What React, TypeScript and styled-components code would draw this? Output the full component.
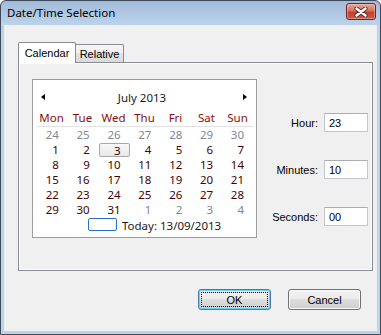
import React from 'react';
import styled, { createGlobalStyle, css } from 'styled-components';

const GlobalStyle = createGlobalStyle`
  html, body {
    margin: 0;
    padding: 0;
    background: #ffffff;
  }
  body {
    width: 381px;
    height: 335px;
    overflow: hidden;
  }
`;

const uiFont = `"Liberation Sans", Arial, sans-serif`;
const segoeFont = `"Noto Sans", "Open Sans", sans-serif`;

const Window = styled.div`
  box-sizing: border-box;
  width: 381px;
  height: 335px;
  border: 1px solid #3e4a5a;
  border-radius: 6px 6px 0 0;
  background: linear-gradient(#a2bbd8, #bcd3ec 24px, #bcd3ec);
  display: flex;
  flex-direction: column;
`;

const TitleBar = styled.div`
  height: 24px;
  display: flex;
  align-items: center;
  justify-content: space-between;
  padding: 0 4px 0 6px;
`;

const Title = styled.span`
  font-family: ${segoeFont};
  font-size: 11.5px;
  color: #000;
  margin-top: -1px;
`;

const CloseButton = styled.div`
  box-sizing: border-box;
  width: 30px;
  height: 17px;
  margin-top: -3px;
  border: 1px solid #6b2323;
  border-radius: 3px;
  background: linear-gradient(#e8a999, #d46f5c 45%, #c2422e 55%, #c85a43);
  box-shadow: inset 0 0 0 1px rgba(255, 210, 200, 0.45);
  display: flex;
  align-items: center;
  justify-content: center;
`;

const Client = styled.div`
  flex: 1;
  margin: 0 3px 3px 3px;
  background: #f0f0f0;
  display: flex;
  flex-direction: column;
  padding: 17px 0 0 14px;
  box-sizing: border-box;
`;

const TabStrip = styled.div`
  display: flex;
  align-items: flex-end;
  height: 20px;
  position: relative;
  z-index: 1;
`;

const Tab = styled.div<{ $active?: boolean; $width: number }>`
  box-sizing: border-box;
  width: ${(p) => p.$width}px;
  border: 1px solid #898c95;
  border-bottom: none;
  border-radius: 2px 2px 0 0;
  font-family: ${uiFont};
  font-size: 11px;
  color: #000;
  display: flex;
  align-items: center;
  justify-content: center;
  ${(p) =>
    p.$active
      ? css`
          height: 21px;
          margin-bottom: -1px;
          background: #ffffff;
          padding-bottom: 1px;
        `
      : css`
          height: 18px;
          margin-left: -1px;
          background: linear-gradient(#f6f6f6, #eeeeee 50%, #e4e4e4 50%, #dadada);
          padding-top: 1px;
        `}
`;

const Panel = styled.div`
  box-sizing: border-box;
  width: 355px;
  height: 209px;
  border: 1px solid #898c95;
  background: #f0f0f0;
  box-shadow: inset 1px 1px 0 #ffffff, inset -1px -1px 0 #ffffff;
  display: flex;
  align-items: flex-start;
`;

const MonthCal = styled.div`
  box-sizing: border-box;
  width: 225px;
  height: 159px;
  margin: 16px 0 0 13px;
  border: 1px solid #9c9c9c;
  background: #ffffff;
  font-family: ${segoeFont};
  font-size: 11.5px;
  padding: 0 1px 0 2px;
`;

const CalHeader = styled.div`
  height: 20px;
  margin-top: 7px;
  display: flex;
  align-items: center;
  justify-content: space-between;
  padding: 0 8px 0 6px;
`;

const Arrow = styled.span<{ $dir: 'left' | 'right' }>`
  width: 0;
  height: 0;
  border-top: 3.5px solid transparent;
  border-bottom: 3.5px solid transparent;
  ${(p) =>
    p.$dir === 'left'
      ? css`
          border-right: 4px solid #000;
        `
      : css`
          border-left: 4px solid #000;
        `}
`;

const MonthTitle = styled.span`
  color: #1a1a1a;
  margin-right: 4px;
`;

const DayNames = styled.div`
  display: grid;
  grid-template-columns: repeat(7, 1fr);
  height: 18px;
  margin: 1px 1px 0 2px;
  align-items: center;
  border-bottom: 1px solid #e2e2e2;
`;

const DayName = styled.span`
  text-align: center;
  color: #8b0d0d;
  margin-left: -2px;
`;

const DateGrid = styled.div`
  display: grid;
  grid-template-columns: repeat(7, 1fr);
  grid-auto-rows: 15px;
  padding: 0 1px 0 3px;
`;

const DateCell = styled.span<{ $muted?: boolean; $selected?: boolean }>`
  box-sizing: border-box;
  display: flex;
  align-items: center;
  justify-content: flex-end;
  padding-right: 10px;
  color: ${(p) => (p.$muted ? '#7f8791' : '#420303')};
  ${(p) =>
    p.$selected &&
    css`
      margin: 1px 1px 0 -1px;
      border: 1px solid #a8a8a8;
      border-radius: 2px;
      background: linear-gradient(#f8f8f8, #e8e8e8);
      padding-right: 8px;
    `}
`;

const TodayRow = styled.div`
  height: 16px;
  display: flex;
  align-items: center;
  gap: 5px;
  padding-left: 53px;
  color: #1a1a1a;
`;

const TodayMark = styled.span`
  box-sizing: border-box;
  width: 29px;
  height: 13px;
  border: 1px solid #2b6fce;
  border-radius: 2px;
  margin-top: -2px;
`;

const Fields = styled.div`
  margin: 50px 4px 0 auto;
  display: flex;
  flex-direction: column;
  gap: 28px;
`;

const FieldRow = styled.label`
  display: flex;
  align-items: center;
  justify-content: flex-end;
  gap: 6px;
  font-family: ${uiFont};
  font-size: 11px;
  color: #000;
`;

const TextBox = styled.div`
  box-sizing: border-box;
  width: 44px;
  height: 19px;
  border: 1px solid #c2c5cb;
  border-top-color: #abadb3;
  background: #ffffff;
  padding: 2px 0 0 4px;
  font-family: ${uiFont};
  font-size: 11px;
  line-height: 14px;
`;

const ButtonRow = styled.div`
  display: flex;
  justify-content: flex-end;
  gap: 17px;
  margin-top: 18px;
  padding-right: 16px;
`;

const Button = styled.div<{ $default?: boolean }>`
  box-sizing: border-box;
  width: 73px;
  height: 21px;
  border: 1px solid ${(p) => (p.$default ? '#3c7fb1' : '#707070')};
  border-radius: 3px;
  background: linear-gradient(#f2f2f2, #ebebeb 50%, #dddddd 50%, #cfcfcf);
  box-shadow: inset 0 0 0 1px ${(p) => (p.$default ? '#6fd0f5' : '#fbfbfb')};
  font-family: ${uiFont};
  font-size: 11px;
  color: #000;
  display: flex;
  align-items: center;
  justify-content: center;
  padding: 2px;
`;

const FocusRect = styled.span`
  box-sizing: border-box;
  width: 100%;
  height: 100%;
  border: 1px dotted #000;
  display: flex;
  align-items: center;
  justify-content: center;
`;

type Day = { n: number; muted?: boolean };

const weeks: Day[][] = [
  [24, 25, 26, 27, 28, 29, 30].map((n) => ({ n, muted: true })),
  [1, 2, 3, 4, 5, 6, 7].map((n) => ({ n })),
  [8, 9, 10, 11, 12, 13, 14].map((n) => ({ n })),
  [15, 16, 17, 18, 19, 20, 21].map((n) => ({ n })),
  [22, 23, 24, 25, 26, 27, 28].map((n) => ({ n })),
  [
    { n: 29 },
    { n: 30 },
    { n: 31 },
    { n: 1, muted: true },
    { n: 2, muted: true },
    { n: 3, muted: true },
    { n: 4, muted: true },
  ],
];

const dayNames = ['Mon', 'Tue', 'Wed', 'Thu', 'Fri', 'Sat', 'Sun'];

const fields = [
  { label: 'Hour:', value: '23' },
  { label: 'Minutes:', value: '10' },
  { label: 'Seconds:', value: '00' },
];

const CloseGlyph = () => (
  <svg width="14" height="10" viewBox="0 0 14 10">
    <path d="M2.5 1.5 L11.5 8.5 M11.5 1.5 L2.5 8.5" stroke="#5a2a2a" strokeWidth="4.2" strokeLinecap="round" />
    <path d="M2.5 1.5 L11.5 8.5 M11.5 1.5 L2.5 8.5" stroke="#ffffff" strokeWidth="2.4" strokeLinecap="round" />
  </svg>
);

export default function App() {
  return (
    <>
      <GlobalStyle />
      <Window>
        <TitleBar>
          <Title>Date/Time Selection</Title>
          <CloseButton>
            <CloseGlyph />
          </CloseButton>
        </TitleBar>
        <Client>
          <TabStrip>
            <Tab $active $width={58}>
              Calendar
            </Tab>
            <Tab $width={49}>Relative</Tab>
          </TabStrip>
          <Panel>
            <MonthCal>
              <CalHeader>
                <Arrow $dir="left" />
                <MonthTitle>July 2013</MonthTitle>
                <Arrow $dir="right" />
              </CalHeader>
              <DayNames>
                {dayNames.map((d) => (
                  <DayName key={d}>{d}</DayName>
                ))}
              </DayNames>
              <DateGrid>
                {weeks.map((week, wi) =>
                  week.map((d, di) => (
                    <DateCell key={`${wi}-${di}`} $muted={d.muted} $selected={wi === 1 && d.n === 3}>
                      {d.n}
                    </DateCell>
                  )),
                )}
              </DateGrid>
              <TodayRow>
                <TodayMark />
                <span>Today: 13/09/2013</span>
              </TodayRow>
            </MonthCal>
            <Fields>
              {fields.map((f) => (
                <FieldRow key={f.label}>
                  {f.label}
                  <TextBox>{f.value}</TextBox>
                </FieldRow>
              ))}
            </Fields>
          </Panel>
          <ButtonRow>
            <Button $default>
              <FocusRect>OK</FocusRect>
            </Button>
            <Button>Cancel</Button>
          </ButtonRow>
        </Client>
      </Window>
    </>
  );
}
